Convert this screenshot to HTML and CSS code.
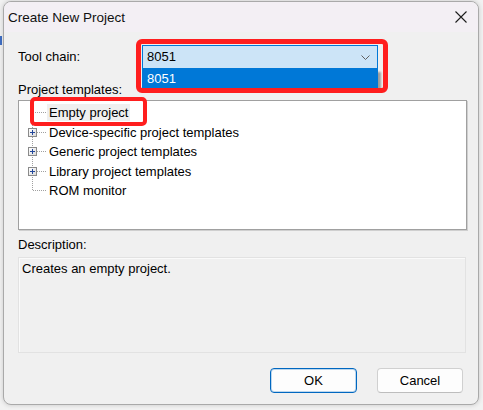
FILE: index.html
```html
<!DOCTYPE html>
<html>
<head>
<meta charset="utf-8">
<title>Create New Project</title>
<link rel="stylesheet" href="styles.css">
</head>
<body>
<div class="behind-mark"></div>
<div class="dialog">
  <div class="titlebar">
    <span class="title">Create New Project</span>
    <svg class="close" width="12" height="12" viewBox="0 0 12 12"><path d="M0.5 0.5 L11.5 11.5 M11.5 0.5 L0.5 11.5" stroke="#1c1c1c" stroke-width="1.1" fill="none"/></svg>
  </div>
  <div class="content">
    <div class="row-tool">
      <span class="label tool-label">Tool chain:</span>
      <div class="combo">
        <span class="combo-text">8051</span>
        <svg class="chevron" width="9" height="5" viewBox="0 0 9 5"><path d="M0.5 0.5 L4.5 4.5 L8.5 0.5" stroke="#606060" stroke-width="1" fill="none"/></svg>
        <div class="droplist">8051</div>
      </div>
    </div>
    <div class="label tmpl-label">Project templates:</div>
    <div class="tree">
      <div class="vline"></div>
      <div class="node first"><span class="conn"><span class="hline"></span></span><span class="text sel">Empty project</span></div>
      <div class="node"><span class="conn"><span class="hline short"></span><span class="plus"></span></span><span class="text">Device-specific project templates</span></div>
      <div class="node"><span class="conn"><span class="hline short"></span><span class="plus"></span></span><span class="text">Generic project templates</span></div>
      <div class="node"><span class="conn"><span class="hline short"></span><span class="plus"></span></span><span class="text">Library project templates</span></div>
      <div class="node"><span class="conn"><span class="hline"></span></span><span class="text">ROM monitor</span></div>
    </div>
    <div class="label desc-label">Description:</div>
    <div class="desc">Creates an empty project.</div>
    <div class="buttons">
      <button class="btn ok">OK</button>
      <button class="btn">Cancel</button>
    </div>
  </div>
  <div class="mark mark-combo"></div>
  <div class="mark mark-empty"></div>
</div>
</body>
</html>
```

FILE: styles.css
```css
html, body {
  margin: 0;
  padding: 0;
}
body {
  width: 483px;
  height: 410px;
  background: #f2f2f2;
  position: relative;
  overflow: hidden;
  font-family: "Liberation Sans", Arial, sans-serif;
}
.behind-mark {
  position: absolute;
  left: 0;
  top: 36px;
  width: 2px;
  height: 9px;
  background: #3f6fc4;
}
.dialog {
  position: relative;
  margin: 1px 0 0 3px;
  width: 476px;
  height: 404px;
  box-sizing: border-box;
  border: 1px solid #a9a9a9;
  border-radius: 8px;
  background: #f0f0f0;
  box-shadow: 0 0 5px rgba(0,0,0,0.18);
  display: flex;
  flex-direction: column;
  overflow: visible;
}
.titlebar {
  height: 30px;
  flex: none;
  background: #f3eff4;
  border-radius: 7px 7px 0 0;
  display: flex;
  align-items: center;
  justify-content: space-between;
  padding: 0 11px 0 4px;
}
.title {
  font-size: 13.5px;
  color: #111;
}
.close {
  display: block;
}
.content {
  padding: 13px 11px 0 14px;
  font-size: 13px;
  color: #000;
}
.label {
  line-height: 16px;
  font-size: 13px;
}
.row-tool {
  display: flex;
  align-items: center;
  height: 24px;
}
.tool-label {
  width: 124px;
  flex: none;
}
.combo {
  position: relative;
  width: 236px;
  height: 24px;
  box-sizing: border-box;
  background: #cce4f7;
  border: 1px solid #0078d7;
  display: flex;
  align-items: center;
  justify-content: space-between;
  padding: 0 7px 0 4px;
}
.combo-text {
  line-height: 16px;
}
.chevron {
  display: block;
}
.droplist {
  position: absolute;
  left: -1px;
  top: 23px;
  width: 236px;
  height: 19px;
  box-sizing: border-box;
  background: #0078d7;
  color: #fff;
  line-height: 19px;
  padding-left: 5px;
  box-shadow: 3px 3px 2px rgba(0,0,0,0.35);
  z-index: 2;
}
.tmpl-label {
  margin-top: 13px;
}
.tree {
  position: relative;
  margin-top: 2px;
  width: 449px;
  height: 130px;
  box-sizing: border-box;
  background: #fff;
  border: 1px solid #a0a0a0;
  box-shadow: 1px 1px 0 #cfcfcf;
  padding-top: 2px;
}
.vline {
  position: absolute;
  left: 13px;
  top: 12px;
  width: 1px;
  height: 78px;
  background: repeating-linear-gradient(to bottom, #a0a0a0 0 1px, transparent 1px 2px);
}
.node {
  height: 19.5px;
  display: flex;
  align-items: center;
}
.conn {
  position: relative;
  width: 28px;
  height: 100%;
  flex: none;
}
.hline {
  position: absolute;
  left: 14px;
  top: 9px;
  width: 13px;
  height: 1px;
  background: repeating-linear-gradient(to right, #a0a0a0 0 1px, transparent 1px 2px);
}
.hline.short {
  left: 18px;
  width: 9px;
}
.plus {
  position: absolute;
  left: 9px;
  top: 5px;
  width: 9px;
  height: 9px;
  box-sizing: border-box;
  border: 1px solid #8a8a8a;
  background: linear-gradient(135deg, #ffffff 0%, #dadada 100%);
}
.plus::before {
  content: "";
  position: absolute;
  left: 1px;
  top: 3px;
  width: 5px;
  height: 1px;
  background: #23479a;
}
.plus::after {
  content: "";
  position: absolute;
  left: 3px;
  top: 1px;
  width: 1px;
  height: 5px;
  background: #23479a;
}
.text {
  line-height: 17px;
  padding: 0 2px;
  white-space: nowrap;
}
.text.sel {
  background: #efefef;
}
.desc-label {
  margin-top: 7px;
}
.desc {
  margin-top: 4px;
  width: 448px;
  height: 96px;
  box-sizing: border-box;
  border: 1px solid #e2e2e2;
  box-shadow: inset 1px 1px 0 #fafafa;
  background: #f0f0f0;
  padding: 3px 3px;
  line-height: 16px;
}
.buttons {
  margin-top: 15px;
  display: flex;
  justify-content: flex-end;
  gap: 20px;
  padding-right: 4px;
}
.btn {
  width: 86px;
  height: 25px;
  box-sizing: border-box;
  font-family: "Liberation Sans", Arial, sans-serif;
  font-size: 13px;
  color: #000;
  background: #fdfdfd;
  border: 1px solid #d0d0d0;
  border-bottom-color: #bdbdbd;
  border-radius: 4px;
  padding: 0;
}
.btn.ok {
  width: 87px;
  border: 1px solid #0067c0;
  box-shadow: inset 0 0 0 1px rgba(0,103,192,0.25);
}
.mark {
  position: absolute;
  box-sizing: border-box;
  border: 4px solid #ff1e1e;
  border-radius: 5px;
  z-index: 3;
}
.mark-combo {
  left: 132px;
  top: 37px;
  width: 252px;
  height: 54px;
  border-width: 5px;
  border-radius: 6px;
}
.mark-empty {
  left: 26px;
  top: 95px;
  width: 117px;
  height: 29px;
}
```
